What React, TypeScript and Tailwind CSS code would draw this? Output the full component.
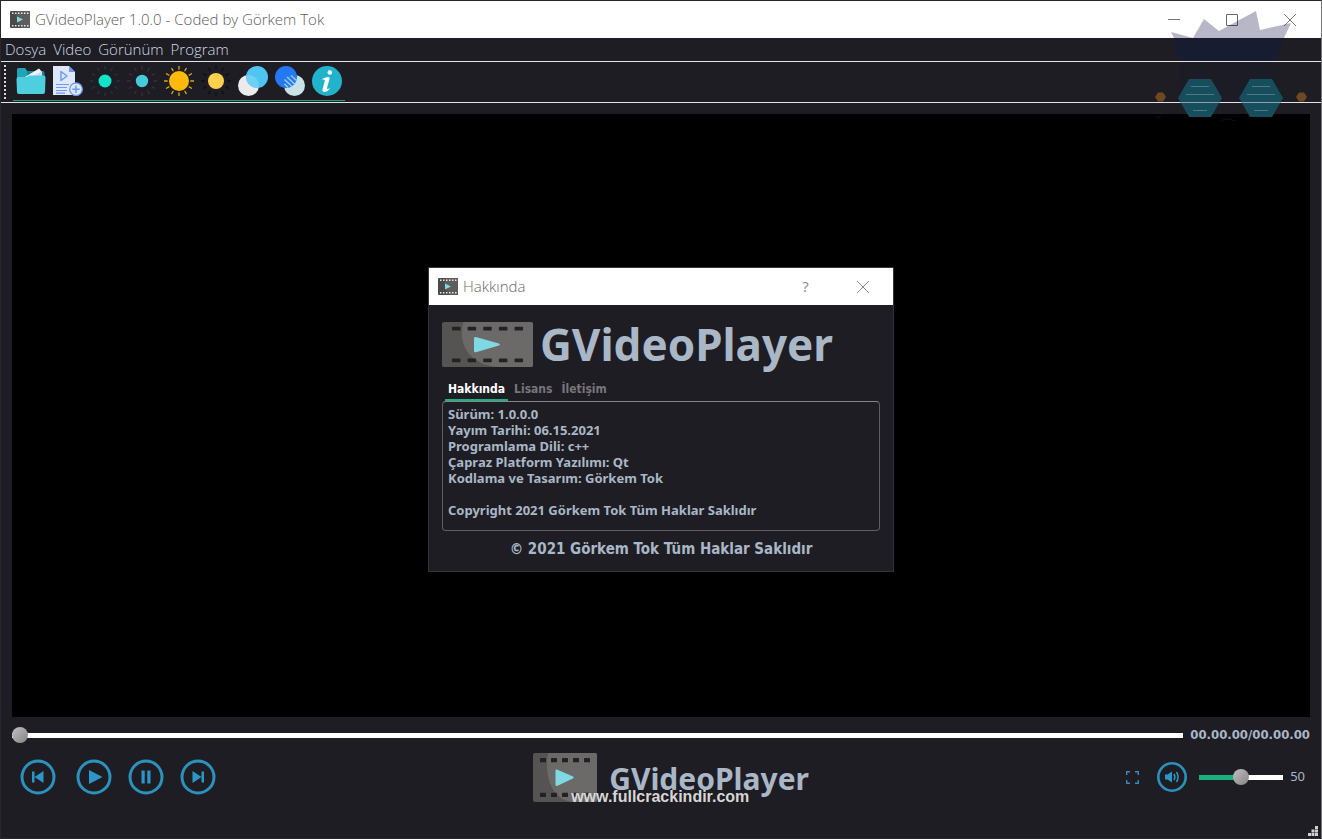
import { useState } from "react";
import type { ReactNode } from "react";

const MENUS = ["Dosya", "Video", "Görünüm", "Program"];

const ABOUT_LINES = [
  "Sürüm: 1.0.0.0",
  "Yayım Tarihi: 06.15.2021",
  "Programlama Dili: c++",
  "Çapraz Platform Yazılımı: Qt",
  "Kodlama ve Tasarım: Görkem Tok",
  "",
  "Copyright 2021 Görkem Tok Tüm Haklar Saklıdır",
];

const THUMB =
  "[&::-webkit-slider-thumb]:appearance-none [&::-webkit-slider-thumb]:w-4 [&::-webkit-slider-thumb]:h-4 [&::-webkit-slider-thumb]:rounded-full [&::-webkit-slider-thumb]:bg-linear-to-br [&::-webkit-slider-thumb]:from-[#c2c0c0] [&::-webkit-slider-thumb]:to-[#858383]";

const FilmIcon = ({ className }: { className: string }) => (
  <svg viewBox="0 0 64 48" preserveAspectRatio="none" className={className} aria-hidden="true">
    <rect width="64" height="48" rx="2" fill="#555453" />
    <path d="M15 0H62a2 2 0 0 1 2 2V46a2 2 0 0 1-2 2H38C18 44 11 22 15 0Z" fill="#6b6a68" />
    {[7, 18, 29, 40, 51].map((x) => (
      <g key={x} fill="#222126">
        <rect x={x} y="5" width="6" height="4" rx="0.5" />
        <rect x={x} y="39" width="6" height="4" rx="0.5" />
      </g>
    ))}
    <path d="M22.5 17.5q0-2 2-1.2L40 23q1.500 1 0 2L24.500 32q-2 .8-2-1.200Z" fill="#7fd8e2" />
  </svg>
);

const TinyFilmIcon = () => (
  <svg viewBox="0 0 20 17" className="w-5 h-[17px] shrink-0" aria-hidden="true">
    <rect width="20" height="17" rx="1" fill="#4b4a4a" />
    <path d="M7 0h13v17h-8Q5 10 7 0Z" fill="#5e5d5c" />
    {[2, 5, 8, 11, 14, 17].map((x) => (
      <g key={x} fill="#e8e8e8">
        <rect x={x} y="1.500" width="1.500" height="1.500" />
        <rect x={x} y="14" width="1.500" height="1.500" />
      </g>
    ))}
    <path d="M7 5.500 13 8.500 7 11.500Z" fill="#7fd8e2" />
  </svg>
);

const SunIcon = ({ fill, ray, r }: { fill: string; ray: string; r: number }) => (
  <svg viewBox="0 0 30 30" className="w-[30px] h-[30px]" aria-hidden="true">
    {Array.from({ length: 12 }, (_, i) => (
      <path
        key={i}
        d="M15 .5V3.200"
        stroke={ray}
        strokeWidth="1.300"
        strokeLinecap="round"
        transform={`rotate(${i * 30} 15 15)`}
      />
    ))}
    <circle cx="15" cy="15" r={r} fill={fill} />
  </svg>
);

const FolderIcon = () => (
  <svg viewBox="0 0 30 30" className="w-[30px] h-[30px]" aria-hidden="true">
    <path d="M1 4q0-2 2-2h6l2 3h16q1.500 0 1.500 2v12H1Z" fill="#1c8494" />
    <path d="M1 4q0-2 2-2h6l2 3v8H1Z" fill="#1fa5b5" />
    <path d="M9 11 23 2.500l3 3.500v6Z" fill="#f0f2fa" />
    <path d="M17 10 26 5.500v6Z" fill="#cfd9ef" />
    <path d="M.5 13q0-2 2-2h8l3-1.500h14q2 0 2 2L29 26q-.2 2-2 2H3q-2 0-2-2Z" fill="#4dcfdf" />
  </svg>
);

const AddFileIcon = () => (
  <svg viewBox="0 0 30 30" className="w-[30px] h-[30px]" aria-hidden="true">
    <path d="M0 0h16l6 6v23H0Z" fill="#dfe8fb" />
    <path d="M16 0v6h6Z" fill="#6d9af0" />
    <path d="M8 5.500v9l6-4.500Z" fill="#dfe8fb" stroke="#6d9af0" strokeWidth="1.500" strokeLinejoin="round" />
    <path d="M3 18.500h13M3 21.500h11M3 24.500h11M3 27.200h9" stroke="#6d9af0" strokeWidth="1.200" />
    <circle cx="23" cy="23.200" r="6.300" fill="#dfe8fb" stroke="#6d9af0" strokeWidth="1.300" />
    <path d="M23 19.500v7.400M19.300 23.200h7.400" stroke="#6d9af0" strokeWidth="1.500" />
  </svg>
);

const ContrastIcon = () => (
  <svg viewBox="0 0 30 30" className="w-[30px] h-[30px]" aria-hidden="true">
    <circle cx="10.500" cy="19.500" r="10.500" fill="#ebebee" />
    <circle cx="19" cy="11" r="11" fill="#4fc6f2" />
    <path d="M8.500 9.300A10.500 10.500 0 0 1 20.700 21.800 11 11 0 0 1 8.500 9.300Z" fill="#70cff2" />
  </svg>
);

const SaturationIcon = () => (
  <svg viewBox="0 0 30 30" className="w-[30px] h-[30px]" aria-hidden="true">
    <circle cx="19.500" cy="19.500" r="10.500" fill="#c8e2e6" />
    <circle cx="11" cy="11" r="11" fill="#2478f2" />
    <path d="M9.500 18 13 21.500M9.500 13.500 17 20.500M12 11l8 7.500M16 9.500l5.500 5" stroke="#9cccf0" strokeWidth="1.500" />
  </svg>
);

const InfoIcon = () => (
  <svg viewBox="0 0 30 30" className="w-[30px] h-[30px]" aria-hidden="true">
    <circle cx="15" cy="15" r="15" fill="#22b3cc" />
    <circle cx="17.800" cy="6.500" r="2.300" fill="#fff" />
    <path
      d="M10.500 12.700q3-1.700 5.800-1.700c1.400 0 1.500.7 1.200 1.900L15 22c-.4 1.400.8 1.300 3.300-.2-2 3-4 4.200-6 4.200-1.800 0-2.200-1.200-1.700-3l2.100-7.500c.4-1.500.1-2.300-2.400-1.700Z"
      fill="#fff"
    />
  </svg>
);

const CloseIcon = ({ color }: { color: string }) => (
  <svg viewBox="0 0 12 12" className="w-3 h-3" aria-hidden="true">
    <path d="M0 0 12 12M12 0 0 12" stroke={color} fill="none" />
  </svg>
);

const TOOLS = [
  { label: "Dosya aç", icon: <FolderIcon /> },
  { label: "Listeye ekle", icon: <AddFileIcon /> },
  { label: "Parlaklık azalt", icon: <SunIcon fill="#11e3cb" ray="#243342" r={6.5} /> },
  { label: "Parlaklık sıfırla", icon: <SunIcon fill="#45cbdc" ray="#432a40" r={6.2} /> },
  { label: "Parlaklık artır", icon: <SunIcon fill="#ffb90a" ray="#dda820" r={10} /> },
  { label: "Parlaklık", icon: <SunIcon fill="#fcd04d" ray="#0e0d12" r={8} /> },
  { label: "Kontrast", icon: <ContrastIcon /> },
  { label: "Doygunluk", icon: <SaturationIcon /> },
  { label: "Hakkında", icon: <InfoIcon /> },
];

// Mascot that floats over the top right corner of the window
const Mascot = () => (
  <svg
    viewBox="0 0 160 124"
    className="absolute top-0 right-[11px] w-40 h-[124px] pointer-events-none"
    aria-hidden="true"
  >
    <path
      d="M21 31 43 37 54 18 69 30 106 10 110 29 141 22 134 37H24Z"
      fill="#11104a"
      opacity="0.300"
    />
    <path d="M24 37H134L126 60H28Z" fill="#151b38" opacity="0.650" />
    <path d="M28 62h102v38H28Z" fill="#151b38" opacity="0.200" />
    {[50, 111].map((x) => (
      <g key={x}>
        <path
          d={`M${x - 22} 97 ${x - 11} 78H${x + 11}L${x + 22} 97 ${x + 11} 116H${x - 11}Z`}
          fill="#174e5e"
        />
        <path
          d={`M${x - 9} 85.500H${x + 9}M${x - 14} 93.500H${x + 14}M${x - 7} 109.500H${x + 7}`}
          stroke="#4c7880"
        />
        <path d={`M${x - 20} 101.500H${x + 20}`} stroke="#8aa2a7" />
      </g>
    ))}
    {[10, 151].map((x) => (
      <path key={x} d={`M${x - 5} 96l3-4.500h5l3 4.500-3 4.500h-5Z`} fill="#704923" />
    ))}
    <path d="M71 120q6-4 14 0M5 116h6" stroke="#11131c" fill="none" />
  </svg>
);

const TitleBar = () => (
  <header className="flex h-[37px] items-center bg-white pl-[9px]">
    <TinyFilmIcon />
    <h1 className="ml-[5px] flex-1 font-['Open_Sans',sans-serif] text-[15px] font-light text-[#5c5c5c]">
      GVideoPlayer 1.0.0 - Coded by Görkem Tok
    </h1>
    <div className="flex h-full gap-[11px] pr-2">
      <button aria-label="Küçült" className="flex w-[47px] items-center justify-center">
        <svg viewBox="0 0 12 12" className="w-3 h-3">
          <path d="M0 5.500H12" stroke="#777" />
        </svg>
      </button>
      <button aria-label="Ekranı kapla" className="flex w-[47px] items-center justify-center">
        <svg viewBox="0 0 12 12" className="w-3 h-3">
          <path d="M.5.5h11v11H.5Z" stroke="#66656f" fill="none" />
        </svg>
      </button>
      <button aria-label="Kapat" className="flex w-[47px] items-center justify-center">
        <CloseIcon color="#777" />
      </button>
    </div>
  </header>
);

const ToolBar = () => (
  <div className="flex h-[42px] items-start border-y border-[#e4e4e4] pl-[3px]">
    <div className="mt-[3px] h-[34px] w-[2px] bg-[repeating-linear-gradient(to_bottom,#d8d8d8_0_2px,transparent_2px_4px)]" />
    <div className="ml-[7px] flex h-[39px] gap-[7px] border-b border-[#1fa57c] px-[3px] pt-1">
      {TOOLS.map((tool) => (
        <button key={tool.label} aria-label={tool.label} className="h-[30px] w-[30px]">
          {tool.icon}
        </button>
      ))}
    </div>
  </div>
);

const RoundButton = ({ label, children }: { label: string; children: ReactNode }) => (
  <button aria-label={label} className="h-9 w-9">
    <svg viewBox="0 0 36 36" className="h-9 w-9" aria-hidden="true">
      <circle cx="18" cy="18" r="16" fill="none" stroke="#2b92bd" strokeWidth="3" />
      <g fill="#2b97c8">{children}</g>
    </svg>
  </button>
);

const AboutDialog = ({ onClose }: { onClose: () => void }) => {
  const [tab, setTab] = useState("Hakkında");

  return (
    <div
      role="dialog"
      aria-label="Hakkında"
      className="absolute top-[266px] left-1/2 flex w-[466px] -translate-x-1/2 flex-col border border-[#34333a] bg-[#1e1d23] pb-3"
    >
      <div className="flex h-[37px] items-center bg-white pl-[9px]">
        <TinyFilmIcon />
        <h2 className="ml-[5px] flex-1 font-['Open_Sans',sans-serif] text-[15px] font-light text-[#666]">
          Hakkında
        </h2>
        <button
          aria-label="Yardım"
          className="w-[47px] font-['Open_Sans',sans-serif] text-[15px] text-[#888]"
        >
          ?
        </button>
        <button
          aria-label="Kapat"
          onClick={onClose}
          className="mr-[7px] ml-[10px] flex w-[47px] justify-center"
        >
          <CloseIcon color="#888" />
        </button>
      </div>

      <div className="flex items-center gap-[7px] px-[13px] pt-[15px]">
        <FilmIcon className="h-[45px] w-[91px]" />
        <p className="text-[44px] leading-[48px] font-bold text-[#a9b7c6]">GVideoPlayer</p>
      </div>

      <div
        role="tablist"
        className="mt-[9px] flex gap-[3px] pl-4 font-['DejaVu_Sans_Condensed','DejaVu_Sans',sans-serif] text-xs"
      >
        {["Hakkında", "Lisans", "İletişim"].map((name) => (
          <button
            key={name}
            role="tab"
            aria-selected={tab === name}
            onClick={() => setTab(name)}
            className={
              tab === name
                ? "h-6 border-b-2 border-[#1eb080] px-[3px] pt-px font-bold text-white"
                : "h-6 border-b-2 border-transparent px-[3px] pt-px font-bold text-[#77767b]"
            }
          >
            {name}
          </button>
        ))}
      </div>

      <div className="mx-[13px] h-[130px] rounded-sm border border-[#605f64] border-t-[#858488] px-[5px] pt-1 leading-4 font-bold">
        {ABOUT_LINES.map((line, i) => (
          <p key={i} className="h-4">
            {line}
          </p>
        ))}
      </div>

      <p className="mt-2 text-center font-['DejaVu_Sans_Condensed','DejaVu_Sans',sans-serif] text-[15px] leading-5 font-bold">
        © 2021 Görkem Tok Tüm Haklar Saklıdır
      </p>
    </div>
  );
};

export default function App() {
  const [aboutOpen, setAboutOpen] = useState(true);
  const [position, setPosition] = useState(0);
  const [volume, setVolume] = useState(50);

  return (
    <div className="relative flex min-h-screen flex-col border border-[#28272d] border-r-[#77767c] bg-[#1e1d23] font-['Noto_Sans',sans-serif] text-[13px] text-[#a9b7c6]">
      <TitleBar />
      <nav className="flex h-[23px] items-center gap-[7px] pl-1 font-['Open_Sans',sans-serif] text-[15px] font-light text-[#d0dae6]">
        {MENUS.map((menu) => (
          <button key={menu}>{menu}</button>
        ))}
      </nav>
      <ToolBar />

      <main className="mx-[11px] mt-[11px] flex-1 bg-black" />

      <footer className="pb-[37px]">
        <div className="flex h-9 items-center gap-[7px] px-[11px]">
          <input
            type="range"
            aria-label="Konum"
            value={position}
            onChange={(e) => setPosition(Number(e.target.value))}
            className={`h-[5px] flex-1 appearance-none bg-white ${THUMB}`}
          />
          <span className="font-['DejaVu_Sans_Condensed','DejaVu_Sans',sans-serif] font-bold">
            00.00.00/00.00.00
          </span>
        </div>

        <div className="flex h-12 items-center justify-between pr-4 pl-[19px]">
          <div className="flex gap-4">
            <RoundButton label="Önceki">
              <path d="M12 12.500h2.500v11H12ZM23.500 12v12L14.500 18Z" />
            </RoundButton>
            <div className="ml-1 flex gap-4">
              <RoundButton label="Oynat">
                <path d="M13 11 26.500 18 13 25Z" />
              </RoundButton>
              <RoundButton label="Duraklat">
                <path d="M13.500 11.500h3.200v13h-3.200ZM19.300 11.500h3.200v13h-3.200Z" />
              </RoundButton>
              <RoundButton label="Sonraki">
                <path d="M12.500 12v12L21.500 18ZM21.500 12.500H24v11H21.500Z" />
              </RoundButton>
            </div>
          </div>

          <div className="relative flex items-center gap-3">
            <FilmIcon className="h-[49px] w-16" />
            <p className="pt-1 text-[30px] leading-[48px] font-bold">GVideoPlayer</p>
            <span className="absolute top-9 left-[38px] font-['Liberation_Sans',sans-serif] text-base leading-5 font-bold text-[#d6d6d6]">
              www.fullcrackindir.com
            </span>
          </div>

          <div className="flex items-center">
            <button aria-label="Tam ekran" className="mr-[18px]">
              <svg viewBox="0 0 13 13" className="h-[13px] w-[13px]" aria-hidden="true">
                <path
                  d="M.7 4V.7H4M9 .7h3.300V4M12.300 9v3.300H9M4 12.300H.7V9"
                  fill="none"
                  stroke="#3e86b8"
                  strokeWidth="1.400"
                />
              </svg>
            </button>
            <button aria-label="Ses" className="mr-3">
              <svg viewBox="0 0 30 30" className="h-[30px] w-[30px]" aria-hidden="true">
                <circle cx="15" cy="15" r="13.700" fill="none" stroke="#2b92bd" strokeWidth="2.600" />
                <path d="M8 12.500h2.500L15 9.500v11l-4.500-3H8Z" fill="#2b97c8" />
                <path
                  d="M17 12q1.800 3 0 6M19.500 10q3.200 5 0 10"
                  fill="none"
                  stroke="#2b97c8"
                  strokeWidth="1.500"
                />
              </svg>
            </button>
            <input
              type="range"
              aria-label="Ses düzeyi"
              value={volume}
              onChange={(e) => setVolume(Number(e.target.value))}
              style={{
                backgroundImage: `linear-gradient(to right, #18b07c ${volume}%, #fff ${volume}%)`,
              }}
              className={`mr-[7px] h-[5px] w-[84px] appearance-none ${THUMB}`}
            />
            <span>{volume}</span>
          </div>
        </div>
      </footer>

      <svg
        viewBox="0 0 10 10"
        className="absolute right-[3px] bottom-[2px] h-[10px] w-[10px]"
        aria-hidden="true"
      >
        <path
          d="M7 0h3v3H7ZM7 3.500h3v3H7ZM3.500 3.500h3v3h-3ZM7 7h3v3H7ZM3.500 7h3v3h-3ZM0 7h3v3H0Z"
          fill="#cfcfcf"
        />
      </svg>

      <Mascot />
      {aboutOpen && <AboutDialog onClose={() => setAboutOpen(false)} />}
    </div>
  );
}
